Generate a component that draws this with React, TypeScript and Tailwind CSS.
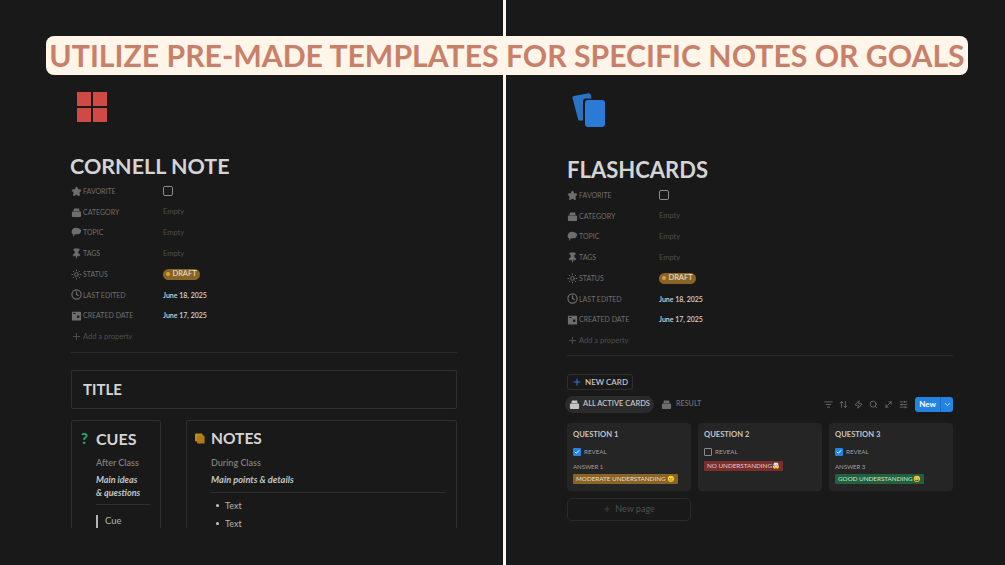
import { Plus, ListFilter, ArrowUpDown, Zap, Search, MoveDiagonal, SlidersHorizontal, ChevronDown, Check, Clock, Pin, Star, Sun } from 'lucide-react';
import type { ReactNode } from 'react';

const font = { fontFamily: 'Lato, "Open Sans", sans-serif' };

function CategoryIcon() {
  return (
    <svg viewBox="0 0 12 12" className="w-[11px] h-[11px]" fill="currentColor">
      <path d="M3.2 1.500h5.600l.6 3H2.600z" />
      <rect x="1" y="5" width="10" height="5.800" rx="1" />
    </svg>
  );
}

function TopicIcon() {
  return (
    <svg viewBox="0 0 12 12" className="w-[11px] h-[11px]" fill="currentColor">
      <path d="M4 1.200c1.500-.8 3.400-.6 4.400.3 1.700.2 2.900 1.800 2.500 3.500-.2 1.700-1.500 2.800-3 2.800H4.500L2.200 10.800l.3-2.700C.8 7.500.3 5.800.9 4.200 1.300 2.800 2.500 1.500 4 1.200z" />
    </svg>
  );
}

function CalendarIcon() {
  return (
    <svg viewBox="0 0 12 12" className="w-[11px] h-[11px]" fill="currentColor">
      <path d="M1 3a1 1 0 0 1 1-1h8a1 1 0 0 1 1 1v7.500a1 1 0 0 1-1 1H2a1 1 0 0 1-1-1z" />
      <rect x="6.500" y="6" width="2.600" height="2.600" fill="#191919" />
      <rect x="2.500" y="3.200" width="2.500" height="1.200" fill="#191919" />
    </svg>
  );
}

function Property({ icon, label, children }: { icon: ReactNode; label: string; children: ReactNode }) {
  return (
    <div className="flex items-center h-[20.7px]">
      <div className="w-[92px] flex items-center gap-[1px] text-[#6e6e6e] text-[7px]">
        <span className="w-[11px] flex justify-center shrink-0">{icon}</span>
        <span>{label}</span>
      </div>
      {children}
    </div>
  );
}

function Properties() {
  const empty = <span className="text-[#4d4d4d] text-[7.5px]">Empty</span>;
  const date = (text: string) => <span className="text-[#d4d4d4] text-[7px] font-semibold">{text}</span>;
  return (
    <div>
      <Property icon={<Star size={11} fill="currentColor" />} label="FAVORITE">
        <span className="w-[10px] h-[10px] rounded-[2px] border border-[#8a8a8a]" />
      </Property>
      <Property icon={<CategoryIcon />} label="CATEGORY">{empty}</Property>
      <Property icon={<TopicIcon />} label="TOPIC">{empty}</Property>
      <Property icon={<Pin size={11} fill="currentColor" />} label="TAGS">{empty}</Property>
      <Property icon={<Sun size={11} />} label="STATUS">
        <span className="h-[11px] w-[37px] rounded-full bg-[#8a6426] text-[#f0e6d0] text-[7.5px] flex items-center justify-center gap-[2px]">
          <span className="w-[4px] h-[4px] rounded-full bg-[#e0a030]" />
          DRAFT
        </span>
      </Property>
      <Property icon={<Clock size={11} strokeWidth={2.500} />} label="LAST EDITED">{date('June 18, 2025')}</Property>
      <Property icon={<CalendarIcon />} label="CREATED DATE">{date('June 17, 2025')}</Property>
      <div className="flex items-center h-[20.7px] gap-[1px] text-[#4f4f4f] text-[7.5px]">
        <span className="w-[11px] flex justify-center"><Plus size={11} /></span>
        <span>Add a property</span>
      </div>
    </div>
  );
}

function CornellNote() {
  return (
    <div className="w-[503px] h-[528px] shrink-0 overflow-hidden pt-[92px] pl-[71px] pr-[46px]">
      <div className="ml-[6px] w-[30px] h-[30px] grid grid-cols-2 gap-[2px]">
        <span className="bg-[#cf4a45]" />
        <span className="bg-[#cf4a45]" />
        <span className="bg-[#cf4a45]" />
        <span className="bg-[#cf4a45]" />
      </div>
      <h1 className="mt-[29px] -ml-[1px] h-[30px] text-[21.5px] leading-[30px] font-bold text-[#d4d4d4]">CORNELL NOTE</h1>
      <Properties />
      <div className="mt-[5px] h-px bg-[#2a2a2a]" />
      <div className="mt-[17px] h-[39px] rounded-[2px] border border-[#2f2f2f] px-[11px] flex items-center text-[15px] font-bold text-[#d4d4d4]">
        TITLE
      </div>
      <div className="mt-[11px] flex gap-[25px]">
        <div className="w-[90px] h-[130px] shrink-0 rounded-[2px] border border-[#2f2f2f] pl-[9px] pr-[10px] pt-[8px]">
          <div className="flex items-center gap-[6px] h-[20px]">
            <span className="text-[15px] font-black text-[#2f9e6a] w-[9px]">?</span>
            <span className="text-[16px] font-bold text-[#d4d4d4]">CUES</span>
          </div>
          <div className="pl-[15px]">
            <p className="mt-[8px] text-[9px] leading-[12px] text-[#7f7f7f] font-semibold">After Class</p>
            <p className="mt-[4px] text-[9px] leading-[13px] text-[#c4c4c4] font-bold italic">Main ideas<br />&amp; questions</p>
            <div className="mt-[5px] h-px bg-[#2f2f2f]" />
            <div className="mt-[10px] flex items-center gap-[7px] h-[13px] text-[9.500px] text-[#b4b4b4]">
              <span className="w-[2px] h-[13px] bg-[#b4b4b4]" />
              Cue
            </div>
          </div>
        </div>
        <div className="flex-1 h-[130px] rounded-[2px] border border-[#2f2f2f] pl-[8px] pr-[11px] pt-[8px]">
          <div className="flex items-center gap-[6px] h-[20px]">
            <svg viewBox="0 0 12 12" className="w-[10px] h-[11px]">
              <rect x="0" y="0" width="9" height="9.500" rx="1" fill="#c08a1f" />
              <rect x="2.500" y="2.500" width="9" height="9.500" rx="1" fill="#b07a18" />
            </svg>
            <span className="text-[15.500px] font-bold text-[#d4d4d4]">NOTES</span>
          </div>
          <div className="pl-[16px]">
            <p className="mt-[8px] text-[9px] leading-[12px] text-[#7f7f7f] font-semibold">During Class</p>
            <p className="mt-[4px] text-[9.300px] leading-[13px] text-[#c4c4c4] font-bold italic">Main points &amp; details</p>
            <div className="mt-[6px] h-px bg-[#2f2f2f]" />
            <div className="mt-[7px] flex items-center gap-[6px] h-[12px] pl-[5px] text-[9px] text-[#b4b4b4]">
              <span className="w-[3px] h-[3px] rounded-full bg-[#c4c4c4]" />
              Text
            </div>
            <div className="mt-[6px] flex items-center gap-[6px] h-[12px] pl-[5px] text-[9px] text-[#b4b4b4]">
              <span className="w-[3px] h-[3px] rounded-full bg-[#c4c4c4]" />
              Text
            </div>
          </div>
        </div>
      </div>
    </div>
  );
}

function Tag({ className, children }: { className: string; children: ReactNode }) {
  return (
    <span className={`inline-flex items-center h-[10px] px-[3px] rounded-[1px] text-[6.300px] whitespace-nowrap ${className}`}>
      {children}
    </span>
  );
}

function Card({ title, checked, answer, tag }: { title: string; checked: boolean; answer?: string; tag: ReactNode }) {
  return (
    <div className="w-[124px] h-[68px] rounded-[4px] bg-[#252525] pl-[6px] pt-[6px]">
      <p className="text-[7.600px] leading-[11px] font-bold text-[#c4c4c4]">{title}</p>
      <div className="mt-[8px] flex items-center gap-[3px] h-[8px] text-[6.200px] text-[#a0a0a0]">
        {checked ? (
          <span className="w-[8px] h-[8px] rounded-[1px] bg-[#2383e2] flex items-center justify-center text-white">
            <Check size={6} strokeWidth={4} />
          </span>
        ) : (
          <span className="w-[8px] h-[8px] rounded-[1px] border border-[#8a8a8a]" />
        )}
        REVEAL
      </div>
      {answer && <p className="mt-[6px] text-[6px] leading-[9px] text-[#a0a0a0]">{answer}</p>}
      <div className={answer ? 'mt-[3px] flex' : 'mt-[5px] flex'}>{tag}</div>
    </div>
  );
}

function Flashcards() {
  return (
    <div className="flex-1 h-[565px] overflow-hidden pt-[93px] pl-[61px] pr-[52px]">
      <svg viewBox="0 0 34 34" className="ml-[5px] w-[34px] h-[34px]">
        <path d="M1.800 3 16.500.2a2 2 0 0 1 2.300 1.500L19.500 5.500H14a3 3 0 0 0-3 3V27.500H7.800a1.500 1.500 0 0 1-1.700-1.200L.5 5.300A2 2 0 0 1 1.800 3z" fill="#2a72c4" />
        <rect x="13" y="7" width="20" height="27" rx="3" fill="#2a7ad6" />
      </svg>
      <h1 className="mt-[28px] h-[30px] text-[22px] leading-[30px] font-bold text-[#d4d4d4]">FLASHCARDS</h1>
      <Properties />
      <div className="mt-[4px] h-px bg-[#2a2a2a]" />
      <div className="mt-[18px] w-[66px] h-[16px] rounded-[3px] border border-[#2f2f2f] flex items-center justify-center gap-[3px] text-[8px] font-semibold text-[#c4c4c4]">
        <Plus size={10} className="text-[#2a7ad6]" strokeWidth={2.500} />
        NEW CARD
      </div>
      <div className="mt-[6px] flex items-center h-[17px] -ml-[2px]">
        <div className="h-[17px] w-[89px] rounded-full bg-[#2b2b2b] flex items-center justify-center gap-[3px] text-[7.500px] font-semibold text-[#c4c4c4]">
          <CategoryIcon />
          ALL ACTIVE CARDS
        </div>
        <div className="ml-[7px] flex items-center gap-[4px] text-[7.200px] font-semibold text-[#6e6e6e]">
          <CategoryIcon />
          RESULT
        </div>
        <div className="ml-auto flex items-center gap-[6px] text-[#7a7a7a]">
          <ListFilter size={9} />
          <ArrowUpDown size={9} />
          <Zap size={9} />
          <Search size={9} />
          <MoveDiagonal size={9} />
          <SlidersHorizontal size={9} />
          <div className="h-[15px] w-[38px] ml-[1px] rounded-[3px] bg-[#2383e2] flex items-center text-white text-[8px] font-bold">
            <span className="flex-1 text-center">New</span>
            <span className="w-[13px] h-full border-l border-[#1b6cbd] flex items-center justify-center">
              <ChevronDown size={9} />
            </span>
          </div>
        </div>
      </div>
      <div className="mt-[10px] flex gap-[7px]">
        <Card
          title="QUESTION 1"
          checked
          answer="ANSWER 1"
          tag={<Tag className="bg-[#8a6426] text-[#e8dcc0]">MODERATE UNDERSTANDING 😐</Tag>}
        />
        <Card
          title="QUESTION 2"
          checked={false}
          tag={<Tag className="bg-[#7a2f2f] text-[#e8c8c8]">NO UNDERSTANDING🤯</Tag>}
        />
        <Card
          title="QUESTION 3"
          checked
          answer="ANSWER 3"
          tag={<Tag className="bg-[#22603f] text-[#c8e8d4]">GOOD UNDERSTANDING😀</Tag>}
        />
      </div>
      <div className="mt-[7px] w-[124px] h-[23px] rounded-[5px] border border-[#2a2a2a] flex items-center justify-center gap-[4px] text-[9px] text-[#4f4f4f]">
        <Plus size={8} />
        New page
      </div>
    </div>
  );
}

export default function App() {
  return (
    <div className="relative w-[1005px] h-[565px] overflow-hidden bg-[#191919] flex" style={font}>
      <CornellNote />
      <div className="w-[3px] h-full bg-[#fff5e9] shrink-0" />
      <Flashcards />
      <div className="absolute left-[46px] top-[36px] w-[922px] h-[39px] rounded-[8px] bg-[#fff5e9] flex items-center justify-center text-[30.200px] font-bold text-[#c9806a] whitespace-nowrap">
        UTILIZE PRE-MADE TEMPLATES FOR SPECIFIC NOTES OR GOALS
      </div>
    </div>
  );
}
